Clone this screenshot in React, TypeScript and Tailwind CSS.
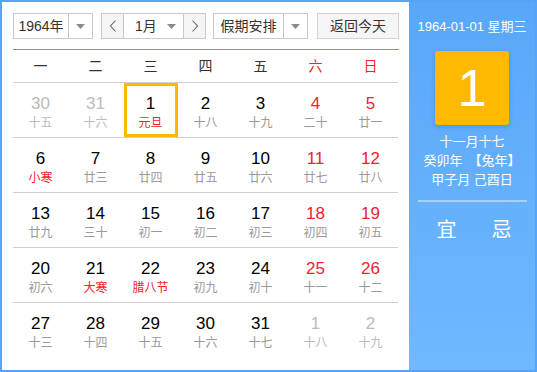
import React from 'react';

type Day = {
  n: number;
  lunar: string;
  other?: boolean;
  festival?: boolean;
};

const weeks: Day[][] = [
  [
    { n: 30, lunar: '十五', other: true },
    { n: 31, lunar: '十六', other: true },
    { n: 1, lunar: '元旦', festival: true },
    { n: 2, lunar: '十八' },
    { n: 3, lunar: '十九' },
    { n: 4, lunar: '二十' },
    { n: 5, lunar: '廿一' },
  ],
  [
    { n: 6, lunar: '小寒', festival: true },
    { n: 7, lunar: '廿三' },
    { n: 8, lunar: '廿四' },
    { n: 9, lunar: '廿五' },
    { n: 10, lunar: '廿六' },
    { n: 11, lunar: '廿七' },
    { n: 12, lunar: '廿八' },
  ],
  [
    { n: 13, lunar: '廿九' },
    { n: 14, lunar: '三十' },
    { n: 15, lunar: '初一' },
    { n: 16, lunar: '初二' },
    { n: 17, lunar: '初三' },
    { n: 18, lunar: '初四' },
    { n: 19, lunar: '初五' },
  ],
  [
    { n: 20, lunar: '初六' },
    { n: 21, lunar: '大寒', festival: true },
    { n: 22, lunar: '腊八节', festival: true },
    { n: 23, lunar: '初九' },
    { n: 24, lunar: '初十' },
    { n: 25, lunar: '十一' },
    { n: 26, lunar: '十二' },
  ],
  [
    { n: 27, lunar: '十三' },
    { n: 28, lunar: '十四' },
    { n: 29, lunar: '十五' },
    { n: 30, lunar: '十六' },
    { n: 31, lunar: '十七' },
    { n: 1, lunar: '十八', other: true },
    { n: 2, lunar: '十九', other: true },
  ],
];

const weekdays = ['一', '二', '三', '四', '五', '六', '日'];

// small grey caret used by the select boxes
const Caret = () => (
  <svg width="9" height="5" viewBox="0 0 9 5">
    <path d="M0 0h9L4.5 5z" fill="#8a8a8a" />
  </svg>
);

const Chevron = ({ dir }: { dir: 'left' | 'right' }) => (
  <svg width="8" height="12" viewBox="0 0 8 12">
    <path
      d={dir === 'left' ? 'M6.5 0.5L1.5 6l5 5.5' : 'M1.5 0.5l5 5.5-5 5.5'}
      fill="none"
      stroke="#666"
      strokeWidth="1.1"
    />
  </svg>
);

export default function App() {
  return (
    <div
      className="w-[537px] h-[372px] border-2 border-[#55a4f7] flex bg-white text-[#333]"
      style={{ fontFamily: '"Liberation Sans", "Noto Sans CJK SC", sans-serif' }}
    >
      {/* Calendar Panel */}
      <div className="w-[407px] h-full bg-white pl-[11px] pr-[10px] pt-[11px] flex flex-col">
        {/* Controls */}
        <div className="flex h-[26px] text-[14px]">
          <div className="w-[80px] flex border border-[#c9c9c9] bg-white">
            <div className="flex-1 flex items-center justify-center border-r border-[#c9c9c9]">1964年</div>
            <div className="w-[23px] flex items-center justify-center">
              <Caret />
            </div>
          </div>

          <div className="ml-[8px] w-[105px] flex border border-[#c9c9c9] bg-white">
            <div className="w-[22px] flex items-center justify-center bg-[#f5f5f5] border-r border-[#c9c9c9]">
              <Chevron dir="left" />
            </div>
            <div className="flex-1 flex items-center pl-[11px] pr-[7px] justify-between">
              <span>1月</span>
              <Caret />
            </div>
            <div className="w-[22px] flex items-center justify-center bg-[#f5f5f5] border-l border-[#c9c9c9]">
              <Chevron dir="right" />
            </div>
          </div>

          <div className="ml-[7px] w-[95px] flex border border-[#c9c9c9] bg-white">
            <div className="flex-1 flex items-center justify-center border-r border-[#c9c9c9]">假期安排</div>
            <div className="w-[23px] flex items-center justify-center">
              <Caret />
            </div>
          </div>

          <div className="ml-[9px] w-[82px] flex items-center justify-center border border-[#d3d3d3] bg-[#f6f6f6]">
            返回今天
          </div>
        </div>

        <div className="mt-[10px] h-[1px] bg-[#4e9ff7]" />

        {/* Weekday header */}
        <div className="grid grid-cols-7 w-[385px] h-[33px] border-b border-[#cfcfcf] text-[14px]">
          {weekdays.map((w, i) => (
            <div
              key={w}
              className={`flex items-center justify-center ${i >= 5 ? 'text-[#f0232d]' : 'text-[#333]'}`}
            >
              {w}
            </div>
          ))}
        </div>

        {/* Day grid */}
        {weeks.map((week, r) => (
          <div
            key={r}
            className={`grid grid-cols-7 w-[385px] h-[55px] ${r < weeks.length - 1 ? 'border-b border-[#cfcfcf]' : ''}`}
          >
            {week.map((d, c) => {
              const selected = r === 0 && d.n === 1;
              const weekend = c >= 5;
              const numColor = d.other ? 'text-[#bbbbbb]' : weekend ? 'text-[#f0232d]' : 'text-black';
              const lunarColor = d.other
                ? 'text-[#bbbbbb]'
                : d.festival
                  ? 'text-[#f0232d]'
                  : 'text-[#999999]';
              return (
                <div key={c} className="flex justify-center">
                  <div
                    className={`w-[54px] h-[54px] flex flex-col items-center ${
                      selected ? 'border-[3px] border-[#ffb800] pt-[8px]' : 'pt-[11px]'
                    }`}
                  >
                    <span className={`text-[17px] leading-[20px] ${numColor}`}>{d.n}</span>
                    <span className={`mt-[1px] text-[12px] leading-[16px] ${lunarColor}`}>{d.lunar}</span>
                  </div>
                </div>
              );
            })}
          </div>
        ))}
      </div>

      {/* Info Panel */}
      <div className="flex-1 h-full bg-gradient-to-b from-[#59a7f8] to-[#70b8ff] flex flex-col items-center text-white">
        <div className="mt-[16px] h-[18px] flex items-center text-[13px] whitespace-nowrap">1964-01-01 星期三</div>
        <div className="mt-[15px] w-[74px] h-[74px] rounded-[3px] bg-[#ffb900] shadow-[0_2px_4px_rgba(0,80,160,0.25)] flex items-center justify-center text-[52px] leading-none font-light">
          1
        </div>
        <div className="mt-[7px] flex flex-col items-center text-[13px] leading-[19px]">
          <span>十一月十七</span>
          <span className="flex items-center whitespace-nowrap">
            癸卯年
            <span className="inline-block w-[19px] text-right">【</span>
            兔年
            <span className="inline-block w-[13px] text-left">】</span>
          </span>
          <span>甲子月 己酉日</span>
        </div>
        <div className="mt-[11px] w-[109px] h-[2px] bg-[#a6d1ff]" />
        <div className="mt-[15px] pl-[4px] flex gap-[35px] text-[20px] leading-[26px]">
          <span>宜</span>
          <span>忌</span>
        </div>
      </div>
    </div>
  );
}
